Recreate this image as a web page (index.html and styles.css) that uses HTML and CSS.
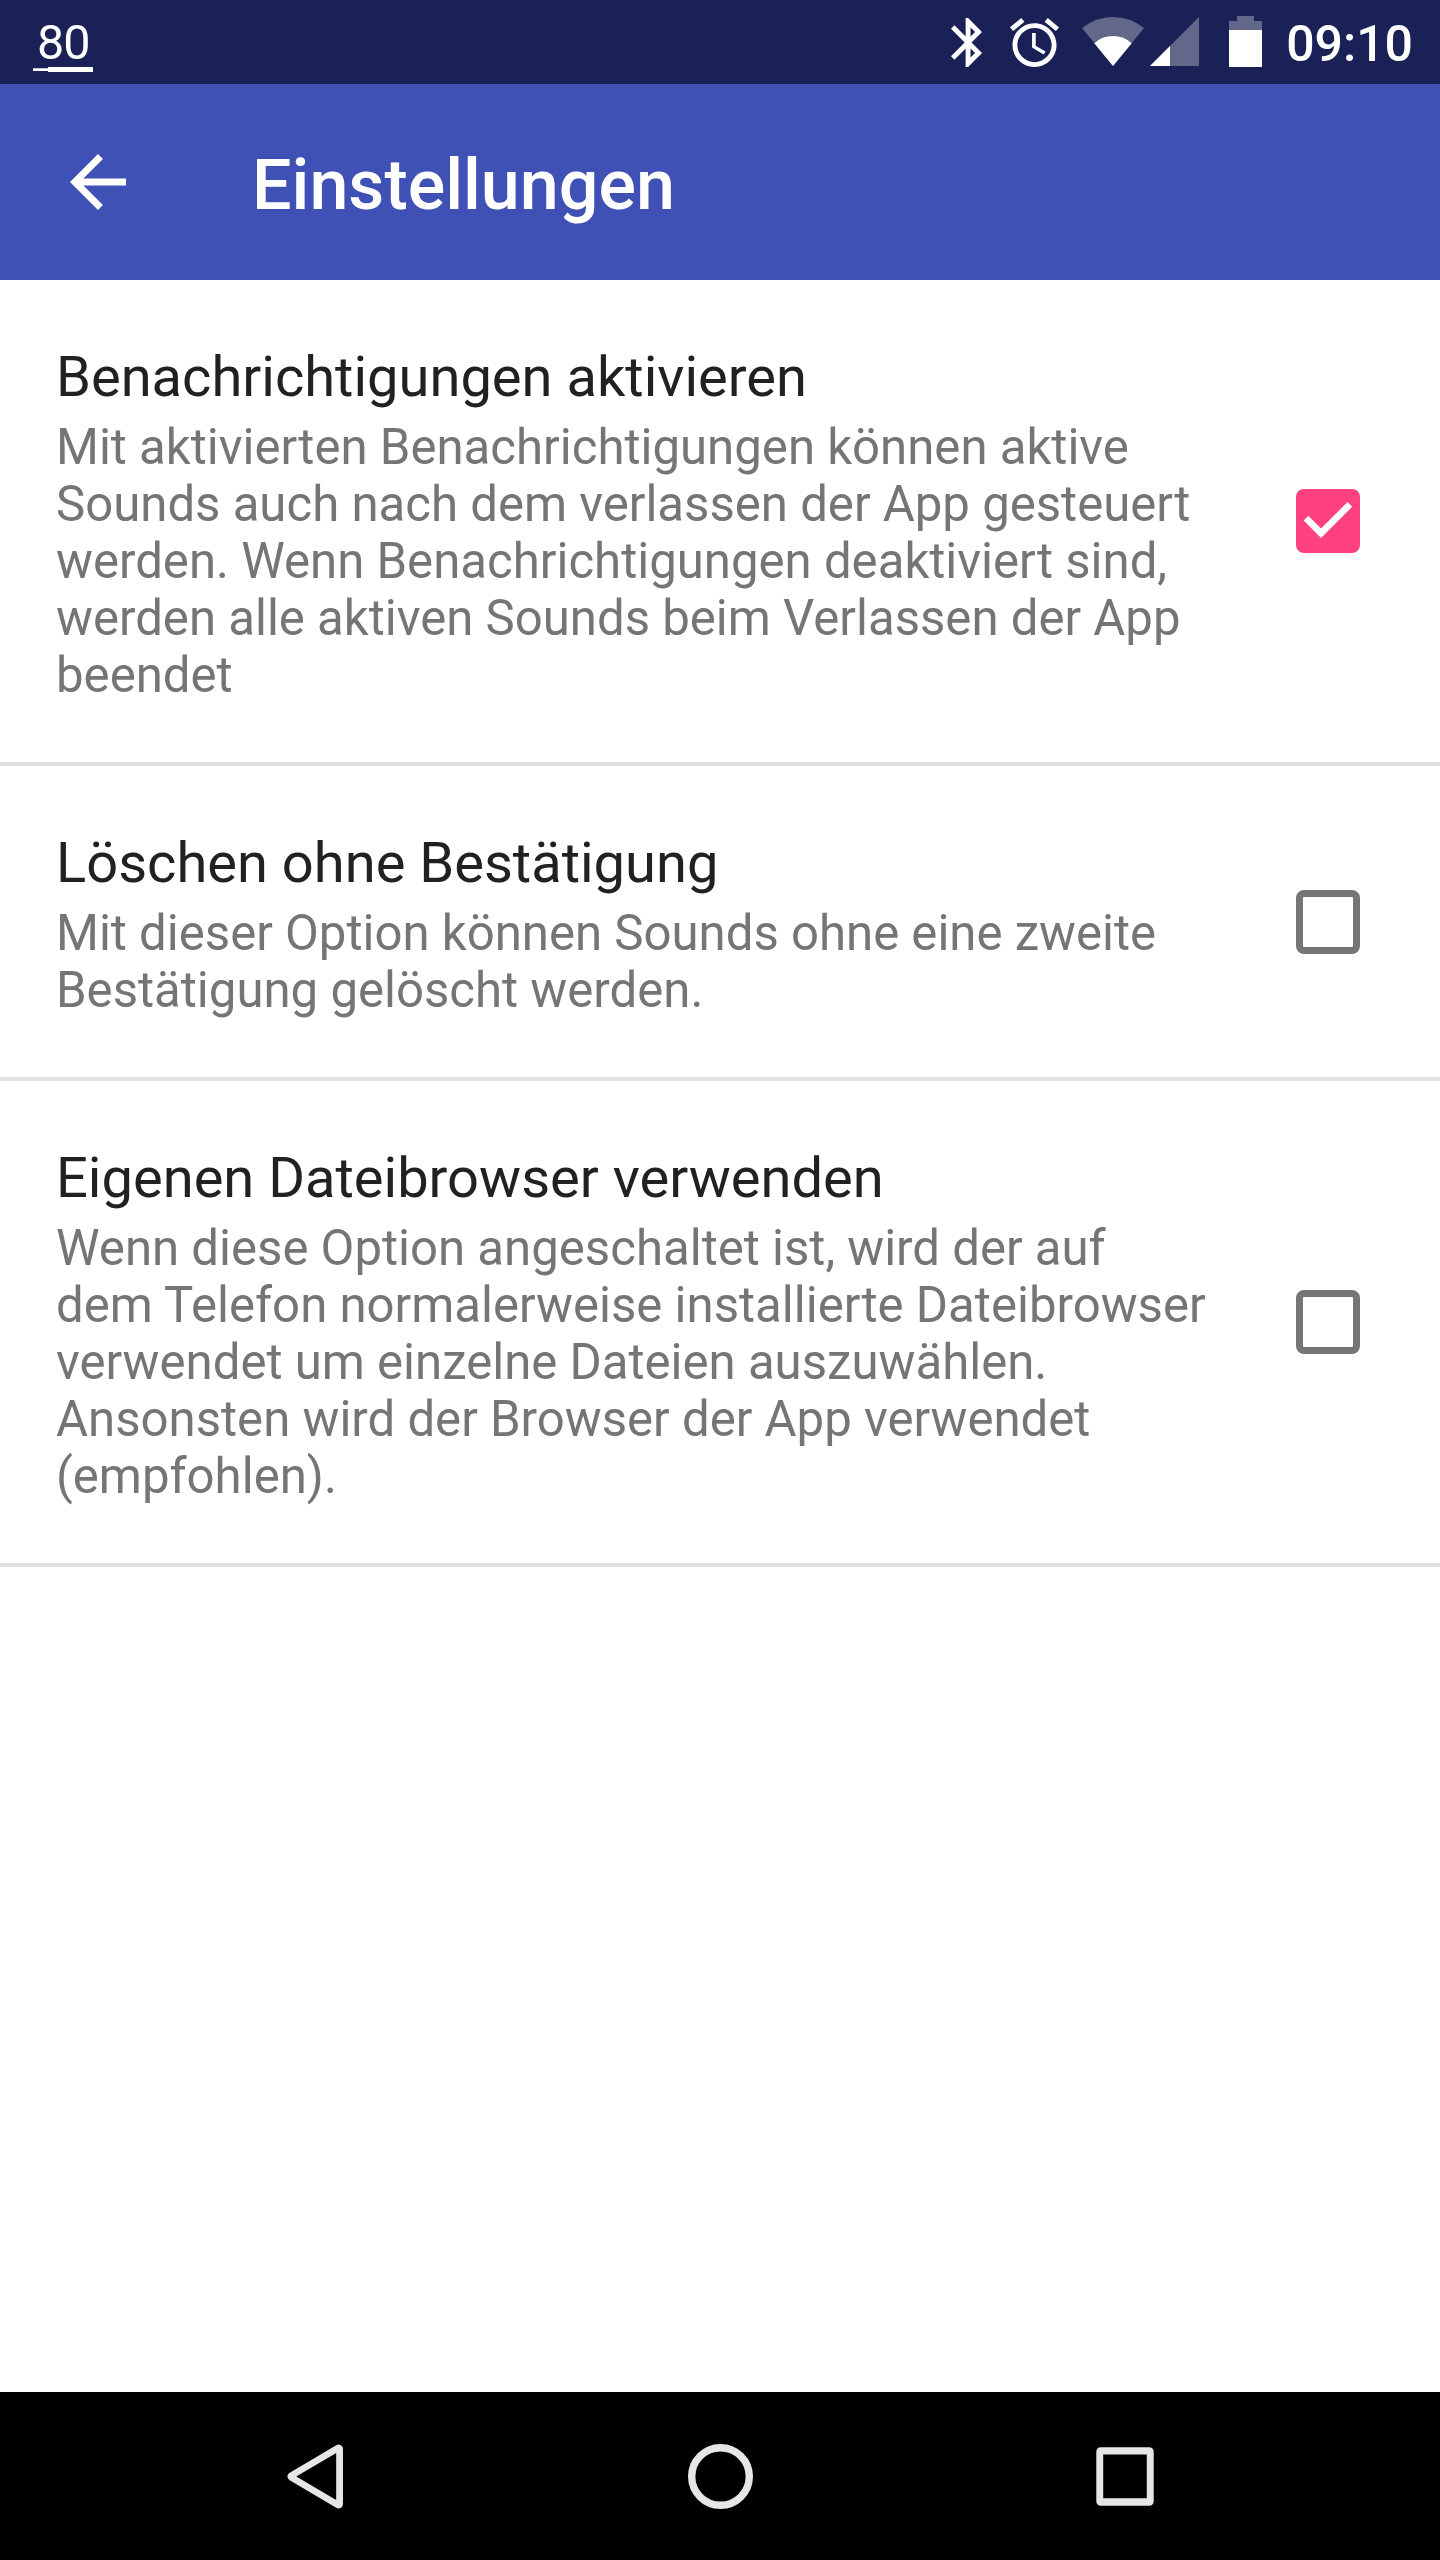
FILE: index.html
```html
<!DOCTYPE html>
<html lang="de">
<head>
<meta charset="utf-8">
<title>Einstellungen</title>
<link rel="stylesheet" href="styles.css">
</head>
<body>
<header class="status">
  <div class="level"><span class="level-value">80</span><svg width="60" height="5" viewBox="0 0 60 5"><path d="M0 1.2H15V0H60V5H15V4H0Z" fill="#fff"/></svg></div>
  <div class="tray">
    <svg class="i-bt" width="31" height="49" viewBox="5 2 12.71 20" preserveAspectRatio="none"><path fill="#fff" d="M17.71 7.71L12 2h-1v7.59L6.41 5 5 6.41 10.59 12 5 17.59 6.41 19 11 14.41V22h1l5.71-5.71-4.3-4.29 4.3-4.29zM13 5.83l1.88 1.88L13 9.59V5.83zm1.88 10.46L13 18.17v-3.76l1.88 1.88z"/></svg>
    <svg class="i-alarm" width="49" height="49" viewBox="2 1.86 20 20.14" preserveAspectRatio="none"><path fill="#fff" d="M22 5.72l-4.6-3.86-1.29 1.53 4.6 3.86L22 5.72zM7.88 3.39L6.6 1.86 2 5.71l1.29 1.53 4.59-3.85zM12.5 8H11v6l4.75 2.85.75-1.23-4-2.37V8zM12 4c-4.97 0-9 4.03-9 9s4.02 9 9 9c4.97 0 9-4.03 9-9s-4.03-9-9-9zm0 16c-3.87 0-7-3.13-7-7s3.13-7 7-7 7 3.13 7 7-3.13 7-7 7z"/></svg>
    <svg class="i-wifi" width="62" height="49" viewBox="0 0 62 49"><path d="M0 11Q14 0 31 0T62 11L31 49Z" fill="#63678a"/><path d="M12.3 26.3Q20 19 31 19T49.7 26.3L31 49Z" fill="#fff"/></svg>
    <svg class="i-cell" width="49" height="49" viewBox="0 0 49 49"><path d="M49 0V49H0Z" fill="#63678a"/><path d="M20 29V49H0Z" fill="#fff"/></svg>
    <svg class="i-bat" width="33" height="51" viewBox="0 0 33 51"><path d="M8 0H25V5H33V51H0V5H8Z" fill="#63678a"/><path d="M0 14H33V51H0Z" fill="#fff"/></svg>
    <span class="clock">09:10</span>
  </div>
</header>
<div class="appbar">
  <svg class="back" width="56" height="56" viewBox="4 4 16 16"><path fill="#fff" d="M20 11H7.83l5.59-5.59L12 4l-8 8 8 8 1.41-1.41L7.83 13H20v-2z"/></svg>
  <h1>Einstellungen</h1>
</div>
<main>
  <section class="pref">
    <div class="text"><h2>Benachrichtigungen aktivieren</h2>
    <p>Mit aktivierten Benachrichtigungen können aktive<br>Sounds auch nach dem verlassen der App gesteuert<br>werden. Wenn Benachrichtigungen deaktiviert sind,<br>werden alle aktiven Sounds beim Verlassen der App<br>beendet</p></div>
    <span class="box checked"><svg width="64" height="64" viewBox="0 0 64 64"><path d="M7.7 31.5 12.3 26.8 25 39.4 51.6 13 56.2 17.7 25 49Z" fill="#fff"/></svg></span>
  </section>
  <section class="pref">
    <div class="text"><h2>Löschen ohne Bestätigung</h2>
    <p>Mit dieser Option können Sounds ohne eine zweite<br>Bestätigung gelöscht werden.</p></div>
    <span class="box"></span>
  </section>
  <section class="pref">
    <div class="text"><h2>Eigenen Dateibrowser verwenden</h2>
    <p>Wenn diese Option angeschaltet ist, wird der auf<br>dem Telefon normalerweise installierte Dateibrowser<br>verwendet um einzelne Dateien auszuwählen.<br>Ansonsten wird der Browser der App verwendet<br>(empfohlen).</p></div>
    <span class="box"></span>
  </section>
</main>
<nav class="navbar">
  <svg width="57" height="65" viewBox="0 0 57 65"><path d="M51.5 5V60L5 32.5Z" fill="none" stroke="#e6e6e6" stroke-width="9" stroke-linejoin="round"/><path d="M49.2 9V56L9.3 32.5Z" fill="#000"/></svg>
  <svg width="65" height="65" viewBox="0 0 65 65"><circle cx="32.5" cy="32.5" r="28.8" fill="none" stroke="#e6e6e6" stroke-width="7.4"/></svg>
  <svg width="58" height="59" viewBox="0 0 58 59"><path d="M5 .3H53Q57.7.3 57.7 5V54Q57.7 58.7 53 58.7H5Q.3 58.7.3 54V5Q.3.3 5 .3ZM7.2 7.4V51.3H50.8V7.4Z" fill="#e6e6e6" fill-rule="evenodd"/></svg>
</nav>
</body>
</html>
```
FILE: styles.css
```css
*{box-sizing:border-box;margin:0}
svg{display:block;flex:none}
body{width:1440px;height:2560px;display:flex;flex-direction:column;background:#fff;font-family:Roboto,sans-serif;overflow:hidden}
.status{height:84px;background:#1a2156;color:#fff;display:flex;justify-content:space-between;padding:0 27px 0 33px}
.level{width:60px;display:flex;flex-direction:column}
.level-value{height:67px;font-size:48.5px;line-height:85px;letter-spacing:-1px;padding-left:4px}
.tray{display:flex;align-items:flex-start;padding-top:17px}
.i-bt{margin-top:1px}
.i-alarm{margin:1px 0 0 28px}
.i-wifi{margin-left:23px}
.i-cell{margin-left:6px}
.i-bat{margin:-1px 0 0 30px}
.clock{font-size:50px;font-weight:500;line-height:54px;margin-left:24px}
.appbar{height:196px;background:#3f51b5;color:#fff;display:flex;align-items:center;padding:0 70px}
.appbar h1{font-size:70px;font-weight:500;line-height:82px;margin:6px 0 0 126px}
main{flex:1}
.pref{display:flex;justify-content:space-between;align-items:center;padding:0 80px 0 56px;border-bottom:4px solid #e0e0e0}
.text{padding:64px 0 58px}
h2{font-size:56.05px;font-weight:400;line-height:66px;color:#212121;white-space:nowrap}
.pref p{font-size:49.13px;line-height:57px;color:#757575;white-space:nowrap;margin-top:9px}
.box{width:64px;height:64px;border:7px solid #757575;border-radius:8px}
.checked{background:#ff4081;border:0}
.navbar{height:168px;background:#000;display:flex;justify-content:space-between;align-items:center;padding:0 286px 0 287px}
```
